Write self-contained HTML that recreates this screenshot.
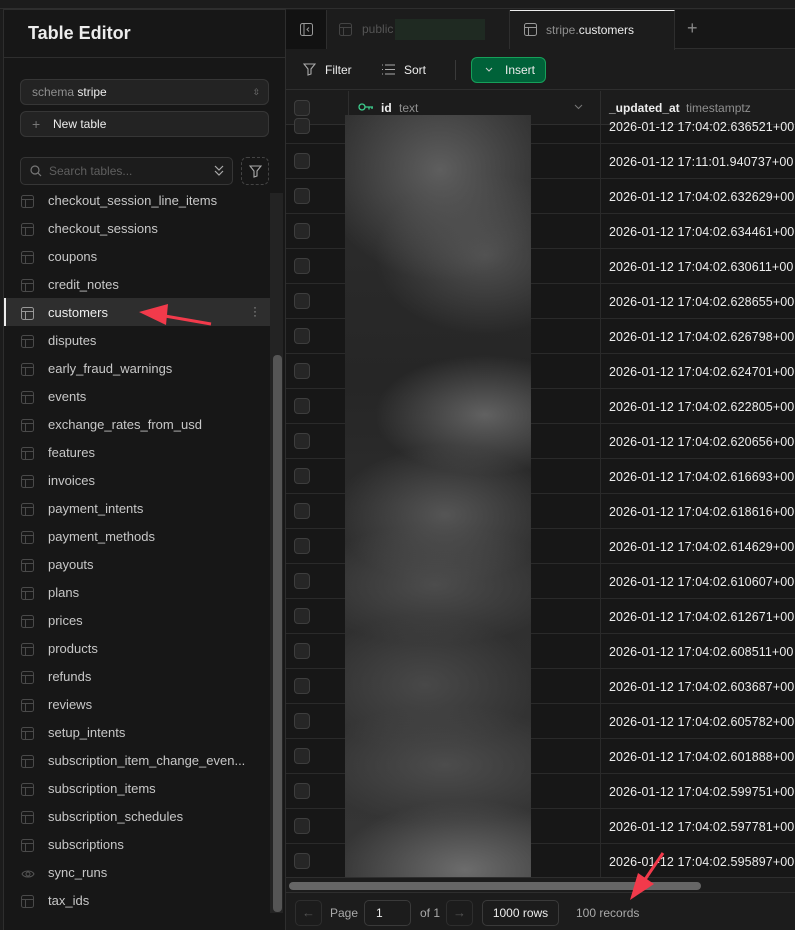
<!DOCTYPE html>
<html><head><meta charset="utf-8"><style>
*{box-sizing:border-box;margin:0;padding:0}
body{width:795px;height:930px;background:#1c1c1c;font-family:"Liberation Sans",sans-serif;position:relative;overflow:hidden;color:#ededed}
.a{position:absolute}
.sb{left:3px;top:9px;width:283px;height:921px;background:#171717;border-left:1px solid #2e2e2e;border-top:1px solid #2e2e2e;border-right:1px solid #2e2e2e}
.item{position:absolute;left:4px;width:266px;height:28px;font-size:13px;color:#c8c8c8;line-height:28px;padding-left:44px;white-space:nowrap;overflow:hidden}
.item svg{position:absolute;left:17px;top:8px}
.row{position:absolute;left:286px;width:509px;height:35px;border-bottom:1px solid #2a2a2a;background:#171717}
.cb{position:absolute;left:8px;width:16px;height:16px;border:1px solid #3e3e3e;border-radius:4px;background:#262626}
.ts{position:absolute;left:323px;font-size:12.5px;letter-spacing:0.1px;color:#ededed;white-space:nowrap}
</style></head><body>
<div class="a" style="left:0;top:0;width:795px;height:9px;background:#1c1c1c;border-bottom:1px solid #2e2e2e"></div>
<div class="a sb"></div>
<div class="a" style="left:28px;top:23px;font-size:18px;font-weight:bold;color:#ededed">Table Editor</div>
<div class="a" style="left:4px;top:57px;width:281px;height:1px;background:#2e2e2e"></div>
<div class="a" style="left:20px;top:79px;width:249px;height:26px;background:#232323;border:1px solid #363636;border-radius:6px;font-size:12px;line-height:24px;padding-left:11px;color:#8f8f8f">schema <span style="color:#ededed">stripe</span><span style="position:absolute;right:8px;top:0;color:#777;font-size:9px">⇳</span></div>
<div class="a" style="left:20px;top:111px;width:249px;height:26px;background:#232323;border:1px solid #363636;border-radius:6px;font-size:12px;line-height:24px;padding-left:32px;color:#ededed"><span style="position:absolute;left:11px;color:#777;font-size:14px">+</span>New table</div>
<div class="a" style="left:20px;top:157px;width:213px;height:28px;background:#1c1c1c;border:1px solid #363636;border-radius:5px;font-size:12px;line-height:26px;padding-left:28px;color:#5f5f5f">Search tables...
<svg class="a" style="left:9px;top:7px" width="12" height="12" viewBox="0 0 12 12"><circle cx="5" cy="5" r="4" fill="none" stroke="#777" stroke-width="1.2"/><path d="M8 8l3 3" stroke="#777" stroke-width="1.2"/></svg>
<svg class="a" style="left:193px;top:7px" width="10" height="12" viewBox="0 0 10 12"><path d="M1 1l4 4 4-4M1 6l4 4 4-4" fill="none" stroke="#aaa" stroke-width="1.2"/></svg></div>
<div class="a" style="left:241px;top:157px;width:28px;height:28px;border:1px dashed #444;border-radius:6px"><svg class="a" style="left:7px;top:7px" width="13" height="13" viewBox="0 0 13 13"><path d="M1 1h11L8 6v5L5 12V6z" fill="none" stroke="#aaa" stroke-width="1.1"/></svg></div>
<div class="a" style="left:4px;top:298px;width:266px;height:28px;background:#2e2e2e;border-left:2px solid #ededed"></div>
<div class="a" style="left:253px;top:305px;color:#999;font-size:12px;line-height:4px;width:3px">·<br>·<br>·</div>
<div class="a" style="left:270px;top:193px;width:13px;height:720px;background:#232323"></div>
<div class="a" style="left:273px;top:355px;width:9px;height:557px;background:#555;border-radius:4px"></div>
<div id="items"></div>
<div class="a" style="left:286px;top:10px;width:509px;height:39px;background:#171717;border-bottom:1px solid #2e2e2e"></div>
<div class="a" style="left:286px;top:10px;width:41px;height:39px;background:#121212;border-right:1px solid #2e2e2e"><svg class="a" style="left:14px;top:13px" width="13" height="13" viewBox="0 0 13 13"><rect x=".5" y=".5" width="12" height="12" rx="2" fill="none" stroke="#999"/><path d="M4 1v11M9 4.5L7 6.5l2 2" fill="none" stroke="#999"/></svg></div>
<div class="a" style="left:327px;top:10px;width:183px;height:39px;background:#1c1c1c;border-right:1px solid #2e2e2e;font-size:12px;color:#555;line-height:39px;padding-left:35px">public</div>
<div class="a" style="left:395px;top:19px;width:90px;height:21px;background:#1f2a22"></div>
<div class="a" style="left:510px;top:10px;width:165px;height:40px;background:#1c1c1c;border-top:1px solid #ededed;border-right:1px solid #2e2e2e;font-size:12px;color:#8f8f8f;line-height:38px;padding-left:36px">stripe.<span style="color:#ededed">customers</span></div>
<svg class="a" style="left:339px;top:23px" width="13" height="13" viewBox="0 0 13 13"><rect x=".5" y=".5" width="12" height="12" rx="2" fill="none" stroke="#444"/><path d="M1 4.5h11M4.5 4.5v8" stroke="#444"/></svg>
<svg class="a" style="left:524px;top:23px" width="13" height="13" viewBox="0 0 13 13"><rect x=".5" y=".5" width="12" height="12" rx="2" fill="none" stroke="#999"/><path d="M1 4.5h11M4.5 4.5v8" stroke="#999"/></svg>
<div class="a" style="left:687px;top:18px;font-size:18px;color:#888">+</div>
<div class="a" style="left:286px;top:50px;width:509px;height:40px;background:#1c1c1c;border-bottom:1px solid #2e2e2e"></div>
<svg class="a" style="left:303px;top:63px" width="13" height="13" viewBox="0 0 13 13"><path d="M1 1h11L8 6v5L5 12V6z" fill="none" stroke="#aaa" stroke-width="1.1"/></svg>
<div class="a" style="left:325px;top:63px;font-size:12px;color:#ededed">Filter</div>
<svg class="a" style="left:382px;top:64px" width="13" height="11" viewBox="0 0 13 11"><path d="M0 1h1M3 1h10M0 5.5h1M3 5.5h10M0 10h1M3 10h10" stroke="#aaa"/></svg>
<div class="a" style="left:404px;top:63px;font-size:12px;color:#ededed">Sort</div>
<div class="a" style="left:455px;top:60px;width:1px;height:20px;background:#3a3a3a"></div>
<div class="a" style="left:471px;top:57px;width:75px;height:26px;background:#006239;border:1px solid #16a05a;border-radius:6px;font-size:12px;color:#ededed;line-height:24px;padding-left:33px">Insert<svg class="a" style="left:13px;top:9px" width="8" height="6" viewBox="0 0 8 6"><path d="M1 1l3 3 3-3" fill="none" stroke="#ccc"/></svg></div>
<div class="a" style="left:286px;top:91px;width:509px;height:34px;background:#1c1c1c;border-bottom:1px solid #2e2e2e"></div>
<div class="a" style="left:348px;top:91px;width:1px;height:34px;background:#2e2e2e"></div>
<div class="a" style="left:600px;top:91px;width:1px;height:34px;background:#2e2e2e"></div>
<div class="cb a" style="left:294px;top:100px"></div>
<svg class="a" style="left:358px;top:103px" width="16" height="8" viewBox="0 0 16 8"><circle cx="4" cy="4" r="3" fill="none" stroke="#3ecf8e" stroke-width="1.3"/><path d="M7 4h8M11 4v2.5M14 4v2" stroke="#3ecf8e" stroke-width="1.3"/></svg>
<div class="a" style="left:381px;top:101px;font-size:12px"><b>id</b> <span style="color:#8f8f8f;margin-left:4px">text</span></div>
<svg class="a" style="left:574px;top:104px" width="9" height="6" viewBox="0 0 9 6"><path d="M1 1l3.5 3.5L8 1" fill="none" stroke="#777"/></svg>
<div class="a" style="left:609px;top:101px;font-size:12px;white-space:nowrap"><b>_updated_at</b> <span style="color:#8f8f8f;margin-left:3px">timestamptz</span></div>
<div id="rows"></div>
<div class="a" style="left:345px;top:115px;width:186px;height:762px;background:
radial-gradient(ellipse 120px 110px at 95px 55px,#5e5e5e,transparent),
radial-gradient(ellipse 110px 80px at 140px 140px,#505050,transparent),
radial-gradient(ellipse 110px 60px at 140px 300px,#616161,transparent),
radial-gradient(ellipse 110px 70px at 100px 400px,#555,transparent),
radial-gradient(ellipse 130px 60px at 90px 470px,#4c4c4c,transparent),
radial-gradient(ellipse 110px 70px at 80px 570px,#484848,transparent),
radial-gradient(ellipse 130px 60px at 100px 650px,#4c4c4c,transparent),
radial-gradient(ellipse 130px 70px at 120px 755px,#6c6c6c,transparent),
linear-gradient(#2e2e2e,#262626 35%,#2f2f2f 60%,#363636)"></div>
<div class="a" style="left:286px;top:877px;width:509px;height:16px;background:#1c1c1c;border-top:1px solid #2e2e2e;border-bottom:1px solid #2e2e2e"></div>
<div class="a" style="left:289px;top:882px;width:412px;height:8px;background:#666;border-radius:4px"></div>
<div class="a" style="left:286px;top:894px;width:509px;height:36px;background:#1c1c1c"></div>
<div class="a" style="left:295px;top:900px;width:27px;height:26px;border:1px solid #2e2e2e;border-radius:5px;color:#555;font-size:13px;text-align:center;line-height:24px">←</div>
<div class="a" style="left:330px;top:906px;font-size:12px;color:#aaa">Page</div>
<div class="a" style="left:364px;top:900px;width:47px;height:26px;border:1px solid #3a3a3a;border-radius:5px;font-size:12px;line-height:24px;padding-left:11px">1</div>
<div class="a" style="left:420px;top:906px;font-size:12px;color:#aaa">of 1</div>
<div class="a" style="left:446px;top:900px;width:27px;height:26px;border:1px solid #2e2e2e;border-radius:5px;color:#555;font-size:13px;text-align:center;line-height:24px">→</div>
<div class="a" style="left:482px;top:900px;width:77px;height:26px;border:1px solid #3a3a3a;border-radius:5px;font-size:12px;line-height:24px;text-align:center">1000 rows</div>
<div class="a" style="left:576px;top:906px;font-size:12px;color:#aaa">100 records</div>
<svg class="a" style="left:0;top:0" width="795" height="930"><path d="M211 324L165 316" stroke="#f23a4b" stroke-width="3"/><path d="M139 312L168 304 166 325z" fill="#f23a4b"/><path d="M663 853L644 881" stroke="#f23a4b" stroke-width="3"/><path d="M630 900L638 873 654 884z" fill="#f23a4b"/></svg>
<script>
var names=["checkout_session_line_items","checkout_sessions","coupons","credit_notes","customers","disputes","early_fraud_warnings","events","exchange_rates_from_usd","features","invoices","payment_intents","payment_methods","payouts","plans","prices","products","refunds","reviews","setup_intents","subscription_item_change_even...","subscription_items","subscription_schedules","subscriptions","sync_runs","tax_ids"];
var h="";names.forEach(function(n,i){var y=187+i*28;var ic=n=="sync_runs"?'<svg width="14" height="14" viewBox="0 0 14 14"><path d="M1 7c2-4 10-4 12 0-2 4-10 4-12 0z" fill="none" stroke="#555"/><circle cx="7" cy="7" r="2" fill="none" stroke="#555"/></svg>':'<svg width="13" height="13" viewBox="0 0 13 13"><rect x=".5" y=".5" width="12" height="12" rx="2" fill="none" stroke="'+(n=="customers"?"#999":"#4a4a4a")+'"/><path d="M1 4.5h11M4.5 4.5v8" stroke="'+(n=="customers"?"#999":"#4a4a4a")+'"/></svg>';h+='<div class="item" style="top:'+y+'px;'+(n=="customers"?"color:#ededed":"")+'">'+ic+n+'</div>'});document.getElementById("items").innerHTML=h;
var ts=["636521","17:11:01.940737","632629","634461","630611","628655","626798","624701","622805","620656","616693","618616","614629","610607","612671","608511","603687","605782","601888","599751","597781","595897"];
var r="";ts.forEach(function(t,i){var y=109+i*35;var s=t.indexOf(":")>0?"2026-01-12 "+t+"+00":"2026-01-12 17:04:02."+t+"+00";r+='<div class="row" style="top:'+(i==0?125:y)+'px;'+(i==0?'height:19px':'')+'"><div class="cb" style="top:'+(i==0?-7:9)+'px"></div><div style="position:absolute;left:62px;top:0;bottom:0;width:1px;background:#2a2a2a"></div><div style="position:absolute;left:314px;top:0;bottom:0;width:1px;background:#2a2a2a"></div><div class="ts" style="top:'+(i==0?-5:11)+'px;left:323px">'+s+'</div></div>'});document.getElementById("rows").innerHTML=r;
</script>
</body></html>
